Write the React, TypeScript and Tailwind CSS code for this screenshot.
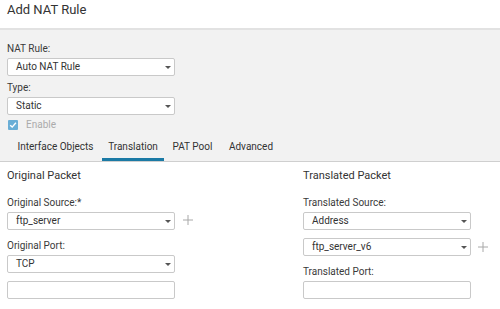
import React from "react";

function Caret() {
  return (
    <svg className="absolute right-[3px] top-[7px]" width="6" height="3" viewBox="0 0 6 3">
      <path d="M0 0H6L3 3Z" fill="#555" />
    </svg>
  );
}

function Select({ value, className = "" }: { value: string; className?: string }) {
  return (
    <div
      className={
        "relative flex h-[18px] w-[168px] items-center rounded-[2px] border border-[#c9c9c9] bg-white pl-[8px] text-[10px] leading-[12px] text-[#333] " +
        className
      }
    >
      <span>{value}</span>
      <Caret />
    </div>
  );
}

function Input({ className = "" }: { className?: string }) {
  return (
    <div className={"h-[18px] w-[168px] rounded-[2px] border border-[#c9c9c9] bg-white " + className} />
  );
}

function Plus({ className = "" }: { className?: string }) {
  return (
    <svg className={className} width="10" height="10" viewBox="0 0 10 10">
      <path d="M5 0V10M0 5H10" stroke="#a8a8a8" strokeWidth="1" />
    </svg>
  );
}

function Label({ children, className = "" }: { children: React.ReactNode; className?: string }) {
  return <div className={"h-[12px] text-[10px] leading-[12px] text-[#3a3a3a] " + className}>{children}</div>;
}

export default function App() {
  const tabs = [
    { name: "Interface Objects", w: "w-[93px]", active: false },
    { name: "Translation", w: "w-[62px]", active: true },
    { name: "PAT Pool", w: "w-[57px]", active: false },
    { name: "Advanced", w: "w-[60px]", active: false },
  ];
  return (
    <div className="h-[309px] w-[500px] overflow-hidden bg-white font-[Roboto,sans-serif] text-[#333]">
      <div className="h-[28px] pl-[7px] pt-[2px] text-[13px] leading-[16px] text-[#333]">Add NAT Rule</div>
      <div className="h-[2px] bg-[#e2e2e2]" />
      <div className="flex h-[132px] flex-col border-b border-[#cfcfcf] bg-[#f2f2f2] pl-[7px] pt-[13px]">
        <Label>NAT Rule:</Label>
        <Select value="Auto NAT Rule" className="mt-[3px]" />
        <Label className="mt-[6px]">Type:</Label>
        <Select value="Static" className="mt-[3px]" />
        <div className="mt-[4px] flex h-[12px] items-center">
          <div className="ml-[1px] flex h-[10px] w-[10px] items-center justify-center rounded-[1px] bg-[#6aaed6]">
            <svg width="8" height="8" viewBox="0 0 8 8">
              <path d="M1.2 4.2L3.2 6.1L6.9 1.8" stroke="#fff" strokeWidth="1.4" fill="none" />
            </svg>
          </div>
          <span className="ml-[8px] text-[10px] leading-[12px] text-[#ababab]">Enable</span>
        </div>
        <div className="ml-[2px] flex h-[30px]">
          {tabs.map((t) => (
            <div key={t.name} className={"flex h-[30px] flex-col " + t.w}>
              <div className="whitespace-nowrap pt-[10px] text-center text-[10px] leading-[12px] text-[#333]">
                {t.name}
              </div>
              <div className={"mt-auto h-[3px] " + (t.active ? "bg-[#1b7aa5]" : "")} />
            </div>
          ))}
        </div>
      </div>
      <div className="flex pl-[7px] pt-[7px]">
        <div className="flex w-[296px] flex-col">
          <div className="h-[13px] text-[11px] leading-[13px] text-[#333]">Original Packet</div>
          <Label className="mt-[15px]">Original Source:*</Label>
          <div className="mt-[3px] flex">
            <Select value="ftp_server" />
            <Plus className="ml-[8px] mt-[3px]" />
          </div>
          <Label className="mt-[10px]">Original Port:</Label>
          <Select value="TCP" className="mt-[3px]" />
          <Input className="mt-[8px]" />
        </div>
        <div className="flex flex-col">
          <div className="h-[13px] text-[11px] leading-[13px] text-[#333]">Translated Packet</div>
          <Label className="mt-[15px]">Translated Source:</Label>
          <Select value="Address" className="mt-[3px]" />
          <div className="mt-[8px] flex">
            <Select value="ftp_server_v6" />
            <Plus className="ml-[7px] mt-[4px]" />
          </div>
          <Label className="mt-[10px]">Translated Port:</Label>
          <Input className="mt-[3px]" />
        </div>
      </div>
    </div>
  );
}
